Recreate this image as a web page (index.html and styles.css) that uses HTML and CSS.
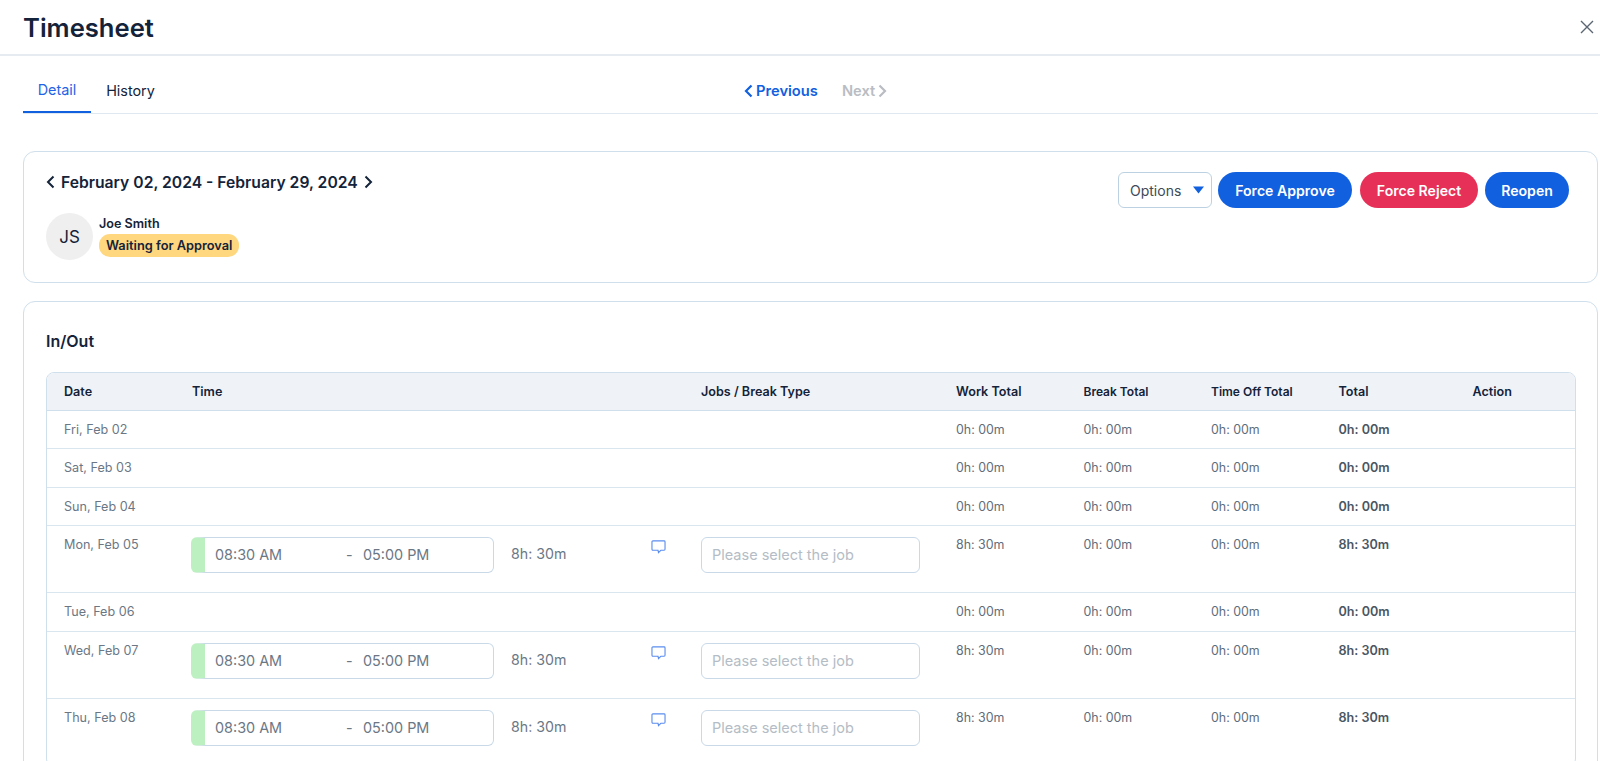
FILE: index.html
```html
<!DOCTYPE html>
<html lang="en">
<head>
  <meta charset="UTF-8">
  <meta name="viewport" content="width=device-width, initial-scale=1.0">
  <title>Timesheet</title>
  <link rel="stylesheet" href="styles.css">
</head>
<body>
  <header class="page-header">
    <h1>Timesheet</h1>
    <button class="close-btn" aria-label="Close">
      <svg width="14" height="14" viewBox="0 0 14 14"><path d="M1 1l12 12M13 1L1 13" stroke="#5b6672" stroke-width="1.4" fill="none"/></svg>
    </button>
  </header>

  <nav class="tab-bar">
    <div class="tabs">
      <a class="tab active">Detail</a>
      <a class="tab">History</a>
    </div>
    <div class="pager">
      <a class="pager-link">
        <svg width="9" height="14" viewBox="0 0 9 14"><path d="M7.5 1.5L2 7l5.5 5.5" stroke="currentColor" stroke-width="2.2" fill="none"/></svg>
        Previous
      </a>
      <a class="pager-link disabled">
        Next
        <svg width="9" height="14" viewBox="0 0 9 14"><path d="M1.5 1.5L7 7l-5.5 5.5" stroke="currentColor" stroke-width="2.2" fill="none"/></svg>
      </a>
    </div>
  </nav>

  <section class="card summary-card">
    <div class="summary-left">
      <div class="date-range">
        <svg width="9" height="14" viewBox="0 0 9 14"><path d="M7.5 1.5L2 7l5.5 5.5" stroke="#14233a" stroke-width="2" fill="none"/></svg>
        <span>February 02, 2024 - February 29, 2024</span>
        <svg width="9" height="14" viewBox="0 0 9 14"><path d="M1.5 1.5L7 7l-5.5 5.5" stroke="#14233a" stroke-width="2" fill="none"/></svg>
      </div>
      <div class="employee">
        <div class="avatar">JS</div>
        <div class="employee-info">
          <div class="employee-name">Joe Smith</div>
          <span class="status-badge">Waiting for Approval</span>
        </div>
      </div>
    </div>
    <div class="summary-actions">
      <div class="options-select">
        <span>Options</span>
        <svg width="11" height="8" viewBox="0 0 11 8"><path d="M0 .5h11L5.5 7.5z" fill="#1160e0"/></svg>
      </div>
      <button class="btn btn-blue approve">Force Approve</button>
      <button class="btn btn-red reject">Force Reject</button>
      <button class="btn btn-blue reopen">Reopen</button>
    </div>
  </section>

  <section class="card inout-card">
    <h2>In/Out</h2>
    <div class="table-wrap">
      <table class="time-table">
        <colgroup>
          <col class="col-date"><col class="col-time"><col class="col-jobs">
          <col class="col-total"><col class="col-total"><col class="col-total">
          <col class="col-sum"><col>
        </colgroup>
        <thead>
          <tr>
            <th>Date</th><th>Time</th><th>Jobs / Break Type</th><th>Work Total</th>
            <th class="th-small">Break Total</th><th class="th-small">Time Off Total</th><th>Total</th><th>Action</th>
          </tr>
        </thead>
        <tbody>
          <tr class="row-empty"><td class="day">Fri, Feb 02</td><td></td><td></td><td>0h: 00m</td><td>0h: 00m</td><td>0h: 00m</td><td class="sum">0h: 00m</td><td></td></tr>
          <tr class="row-empty"><td class="day">Sat, Feb 03</td><td></td><td></td><td>0h: 00m</td><td>0h: 00m</td><td>0h: 00m</td><td class="sum">0h: 00m</td><td></td></tr>
          <tr class="row-empty"><td class="day">Sun, Feb 04</td><td></td><td></td><td>0h: 00m</td><td>0h: 00m</td><td>0h: 00m</td><td class="sum">0h: 00m</td><td></td></tr>
          <tr class="row-entry">
            <td class="day">Mon, Feb 05</td>
            <td>
              <div class="entry">
                <div class="time-box"><span class="time-start">08:30 AM</span><span class="time-dash">-</span><span>05:00 PM</span></div>
                <span class="entry-hours">8h: 30m</span>
                <svg class="comment-icon" width="15" height="14" viewBox="0 0 16 15"><path d="M2 1h12a1 1 0 0 1 1 1v8a1 1 0 0 1-1 1h-3.5L8 13.5 7.5 11H2a1 1 0 0 1-1-1V2a1 1 0 0 1 1-1z" stroke="#5b8def" stroke-width="1.2" fill="none"/></svg>
              </div>
            </td>
            <td><div class="job-input">Please select the job</div></td>
            <td>8h: 30m</td><td>0h: 00m</td><td>0h: 00m</td><td class="sum">8h: 30m</td><td></td>
          </tr>
          <tr class="row-empty"><td class="day">Tue, Feb 06</td><td></td><td></td><td>0h: 00m</td><td>0h: 00m</td><td>0h: 00m</td><td class="sum">0h: 00m</td><td></td></tr>
          <tr class="row-entry">
            <td class="day">Wed, Feb 07</td>
            <td>
              <div class="entry">
                <div class="time-box"><span class="time-start">08:30 AM</span><span class="time-dash">-</span><span>05:00 PM</span></div>
                <span class="entry-hours">8h: 30m</span>
                <svg class="comment-icon" width="15" height="14" viewBox="0 0 16 15"><path d="M2 1h12a1 1 0 0 1 1 1v8a1 1 0 0 1-1 1h-3.5L8 13.5 7.5 11H2a1 1 0 0 1-1-1V2a1 1 0 0 1 1-1z" stroke="#5b8def" stroke-width="1.2" fill="none"/></svg>
              </div>
            </td>
            <td><div class="job-input">Please select the job</div></td>
            <td>8h: 30m</td><td>0h: 00m</td><td>0h: 00m</td><td class="sum">8h: 30m</td><td></td>
          </tr>
          <tr class="row-entry">
            <td class="day">Thu, Feb 08</td>
            <td>
              <div class="entry">
                <div class="time-box"><span class="time-start">08:30 AM</span><span class="time-dash">-</span><span>05:00 PM</span></div>
                <span class="entry-hours">8h: 30m</span>
                <svg class="comment-icon" width="15" height="14" viewBox="0 0 16 15"><path d="M2 1h12a1 1 0 0 1 1 1v8a1 1 0 0 1-1 1h-3.5L8 13.5 7.5 11H2a1 1 0 0 1-1-1V2a1 1 0 0 1 1-1z" stroke="#5b8def" stroke-width="1.2" fill="none"/></svg>
              </div>
            </td>
            <td><div class="job-input">Please select the job</div></td>
            <td>8h: 30m</td><td>0h: 00m</td><td>0h: 00m</td><td class="sum">8h: 30m</td><td></td>
          </tr>
        </tbody>
      </table>
    </div>
  </section>
</body>
</html>
```

FILE: styles.css
```css
html {
  overflow: hidden;
  height: 100%;
}

body {
  margin: 0;
  font-family: Inter, "Noto Sans", sans-serif;
  background-color: #ffffff;
  color: #14233a;
  overflow: hidden;
  height: 100%;
}

.page-header {
  display: flex;
  align-items: center;
  justify-content: space-between;
  height: 54px;
  padding: 0 0 0 23px;
  border-bottom: 2px solid #e6ebf1;
}

.page-header h1 {
  margin: 0;
  font-size: 25.6px;
  font-weight: 600;
  color: #14233a;
}

.close-btn {
  display: flex;
  width: 26px;
  height: 26px;
  align-items: center;
  justify-content: center;
  padding: 0;
  border: none;
  background: none;
}

.tab-bar {
  position: relative;
  display: flex;
  height: 57px;
  margin: 0 2px 0 23px;
  border-bottom: 1px solid #dfe7f0;
}

.tabs {
  display: flex;
}

.tab {
  display: flex;
  align-items: center;
  justify-content: center;
  width: 68px;
  height: 57px;
  box-sizing: border-box;
  padding-top: 11px;
  font-size: 14.4px;
  color: #14233a;
}

.tab + .tab {
  width: 88px;
  padding-right: 9px;
}

.tab.active {
  color: #1f63e8;
  border-bottom: 2px solid #1160e0;
}

.pager {
  display: flex;
  align-items: center;
  gap: 24px;
  margin-left: 565px;
  padding-top: 12px;
}

.pager-link {
  display: flex;
  align-items: center;
  gap: 3px;
  font-size: 14.7px;
  font-weight: 600;
  color: #1160e0;
}

.pager-link.disabled {
  color: #b9bdc3;
}

.card {
  margin: 0 2px 0 23px;
  box-sizing: border-box;
  background: #ffffff;
  border: 1px solid #cfdfec;
  border-radius: 12px;
}

.summary-card {
  display: flex;
  justify-content: space-between;
  height: 132px;
  margin-top: 37px;
  padding: 19px 28px 0 22px;
}

.date-range {
  display: flex;
  align-items: center;
  gap: 6px;
  height: 22px;
  font-size: 15.7px;
  font-weight: 600;
}

.employee {
  display: flex;
  gap: 6px;
  margin-top: 20px;
}

.avatar {
  display: flex;
  align-items: center;
  justify-content: center;
  width: 47px;
  height: 47px;
  border-radius: 50%;
  background: #efefef;
  font-size: 17px;
  color: #14233a;
}

.employee-name {
  margin-top: 3px;
  font-size: 12.6px;
  font-weight: 600;
  line-height: 16px;
}

.status-badge {
  display: inline-block;
  margin-top: 2px;
  padding: 0 7px;
  background: #ffd77f;
  border-radius: 11px;
  font-size: 12.8px;
  font-weight: 600;
  line-height: 23px;
}

.summary-actions {
  display: flex;
  gap: 7px;
  margin-top: 1px;
}

.options-select {
  display: flex;
  align-items: center;
  justify-content: space-between;
  box-sizing: border-box;
  width: 94px;
  height: 36px;
  margin-right: -1px;
  padding: 0 7px 0 11px;
  border: 1px solid #bcd2e2;
  border-radius: 6px;
  font-size: 14px;
  color: #3d4a57;
}

.btn {
  height: 36px;
  padding: 0;
  border: none;
  border-radius: 18px;
  font-family: inherit;
  font-size: 14.1px;
  font-weight: 600;
  color: #ffffff;
}

.btn-blue {
  background: #1160e0;
}

.btn-red {
  background: #e73058;
}

.approve {
  width: 134px;
}

.reject {
  width: 118px;
  margin-left: 1px;
}

.reopen {
  width: 84px;
}

.inout-card {
  height: 600px;
  margin-top: 18px;
  padding: 29px 21px 0 22px;
}

.inout-card h2 {
  margin: 0 0 21px;
  font-size: 16px;
  font-weight: 600;
  line-height: 20px;
}

.table-wrap {
  border: 1px solid #cfdfec;
  border-radius: 8px;
  overflow: hidden;
}

.time-table {
  width: 100%;
  table-layout: fixed;
  border-collapse: collapse;
  font-size: 12.4px;
  color: #5f6c7a;
}

.col-date {
  width: 127px;
}

.col-time {
  width: 509px;
}

.col-jobs {
  width: 255px;
}

.col-total {
  width: 127.5px;
}

.col-sum {
  width: 134px;
}

.time-table th {
  height: 37px;
  padding: 0 0 0 18px;
  background: #eff3f8;
  border-bottom: 1px solid #cfdfec;
  font-size: 12.6px;
  font-weight: 600;
  text-align: left;
  color: #14233a;
}

.time-table th.th-small {
  font-size: 12px;
}

.time-table th:first-child {
  padding-left: 17px;
}

.time-table td {
  padding: 0 0 0 18px;
  border-bottom: 1px solid #d9e5ef;
  white-space: nowrap;
}

.time-table td.day {
  padding-left: 17px;
  font-size: 12.6px;
  color: #6b7785;
}

.time-table .sum {
  font-weight: 600;
  font-size: 12.6px;
  color: #4a5663;
}

.row-empty td {
  height: 37.3px;
}

.row-entry td {
  height: 67.4px;
  padding-top: 11px;
  box-sizing: border-box;
  vertical-align: top;
}

.entry {
  display: flex;
  align-items: flex-start;
  margin-left: -1px;
}

.time-box {
  display: flex;
  align-items: center;
  box-sizing: border-box;
  width: 303px;
  height: 36px;
  padding-left: 10px;
  border: 1px solid #c9d9e8;
  border-left: 14px solid #bdf0c0;
  border-radius: 6px;
  font-size: 14.4px;
  color: #6b7785;
}

.time-start {
  width: 131px;
}

.time-dash {
  width: 17px;
}

.entry-hours {
  margin-left: 17px;
  line-height: 34px;
  font-size: 14.2px;
  color: #6b7785;
}

.comment-icon {
  margin-left: 85px;
  margin-top: 3px;
}

.job-input {
  display: flex;
  align-items: center;
  box-sizing: border-box;
  width: 219px;
  height: 36px;
  padding-left: 10px;
  border: 1px solid #c9d9e8;
  border-radius: 6px;
  font-size: 14.5px;
  color: #b4bcc5;
}
```
